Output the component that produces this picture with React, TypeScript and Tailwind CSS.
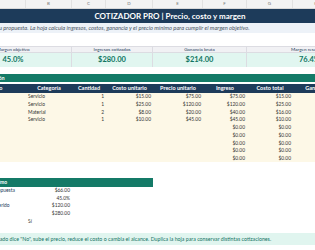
import React from "react";

const cols = "grid grid-cols-[71px_46px_34px_47px_50px_44px_46px_47px]";

const rows = [
  ["Diseño", "Servicio", "1", "$15.00", "$75.00", "$75.00", "$15.00", "$60.00"],
  ["Web", "Servicio", "1", "$25.00", "$120.00", "$120.00", "$25.00", "$95.00"],
  ["Folletos", "Material", "2", "$8.00", "$20.00", "$40.00", "$16.00", "$24.00"],
  ["Soporte", "Servicio", "1", "$10.00", "$45.00", "$45.00", "$10.00", "$35.00"],
  ["", "", "", "", "", "$0.00", "$0.00", "$0.00"],
  ["", "", "", "", "", "$0.00", "$0.00", "$0.00"],
  ["", "", "", "", "", "$0.00", "$0.00", "$0.00"],
  ["", "", "", "", "", "$0.00", "$0.00", "$0.00"],
  ["", "", "", "", "", "$0.00", "$0.00", "$0.00"],
];

const heads = ["Concepto", "Categoría", "Cantidad", "Costo unitario", "Precio unitario", "Ingreso", "Costo total", "Ganancia"];

const kpis = [
  { label: "Margen objetivo", value: "45.0%", w: "w-[117px]" },
  { label: "Ingresos cotizados", value: "$280.00", w: "w-[81px]" },
  { label: "Ganancia bruta", value: "$214.00", w: "w-[94px]" },
  { label: "Margen resultante", value: "76.4%", w: "w-[126px]" },
];

const minRows = [
  ["Costo total de la propuesta", "$66.00", "right"],
  ["Margen objetivo", "45.0%", "right"],
  ["Precio mínimo requerido", "$120.00", "right"],
  ["Precio cotizado", "$280.00", "right"],
  ["¿Cumple el margen?", "Sí", "left"],
];

export default function App() {
  return (
    <div className="w-[315px] h-[250px] overflow-hidden bg-white font-['Lato',sans-serif]">
      <div className="ml-[-45px] w-[430px]">
        {/* column letters */}
        <div className={`${cols} h-[9px] bg-[#f3f3f3] border-b border-[#d9d9d9]`}>
          {["A", "B", "C", "D", "E", "F", "G", "H"].map((l) => (
            <div key={l} className="flex items-center justify-center border-r border-[#e2e2e2] text-[4.5px] text-[#777] leading-none">
              {l}
            </div>
          ))}
        </div>
        {/* title */}
        <div className="h-[14px] bg-[#1d3b5a] flex items-center justify-center pl-[0px] pr-[45px] text-white font-bold text-[8px] leading-none whitespace-nowrap">
          <span className="ml-[45px]">COTIZADOR PRO | Precio, costo y margen</span>
        </div>
        {/* subtitle */}
        <div className="h-[10px] bg-[#edf2f8] flex items-center text-[5.75px] italic text-[#4b5563] leading-none whitespace-nowrap overflow-hidden">
          <span className="ml-[-23px]">
            Completa los conceptos de tu propuesta. La hoja calcula ingresos, costos, ganancia y el precio mínimo para cumplir el margen objetivo.
          </span>
        </div>
        <div className="h-[13px]" />
        {/* KPIs */}
        <div className="flex">
          {kpis.map((k) => (
            <div key={k.label} className={`${k.w} shrink-0 flex flex-col border-r border-[#dcdce2]`}>
              <div className="h-[7px] bg-[#f1f1f4] border-y border-[#dcdce2] flex items-center justify-center text-[4.6px] text-[#1d3b5a] leading-none whitespace-nowrap">
                {k.label}
              </div>
              <div className="h-[14px] bg-[#e1f6f0] flex items-center justify-center text-[7.5px] font-bold text-[#0f7562] leading-none whitespace-nowrap">
                {k.value}
              </div>
            </div>
          ))}
        </div>
        <div className="h-[7px]" />
        {/* section bar */}
        <div className="h-[8px] bg-[#147a67] flex items-center text-[5px] font-bold text-white leading-none whitespace-nowrap overflow-hidden">
          <span className="ml-[-2px]">Detalle de la cotización</span>
        </div>
        {/* table header */}
        <div className={`${cols} h-[9px] bg-[#1d3b5a] mt-[2px]`}>
          {heads.map((h) => (
            <div key={h} className="flex items-center justify-center text-[5.5px] font-bold text-white leading-none whitespace-nowrap overflow-hidden">
              {h}
            </div>
          ))}
        </div>
        {/* data rows */}
        <div className="bg-[#fdf8e7]">
          {rows.map((r, i) => (
            <div key={i} className={`${cols} h-[7.7px]`}>
              {r.map((c, j) => (
                <div
                  key={j}
                  className={`flex items-center px-[2px] text-[4.9px] text-[#333] leading-none whitespace-nowrap overflow-hidden ${
                    j <= 1 ? "justify-start" : "justify-end"
                  }`}
                >
                  {c}
                </div>
              ))}
            </div>
          ))}
        </div>
        <div className="h-[16px]" />
        {/* min price section */}
        <div className="w-[198px] h-[9px] bg-[#147a67] flex items-center text-[5px] font-bold text-white leading-none whitespace-nowrap overflow-hidden">
          <span className="ml-[-4px]">Cálculo de precio mínimo</span>
        </div>
        {minRows.map(([l, v, a], i) => (
          <div key={i} className={`${cols} ${i === 4 ? "h-[9px]" : "h-[7.5px]"}`}>
            <div className="flex items-center px-[2px] text-[4.9px] text-[#1d3b5a] leading-none whitespace-nowrap">{l}</div>
            <div className={`flex items-center px-[2px] text-[4.9px] text-[#333] leading-none whitespace-nowrap ${a === "right" ? "justify-end" : "justify-start"}`}>
              {v}
            </div>
          </div>
        ))}
        <div className="h-[7px]" />
        {/* note */}
        <div className="h-[12px] bg-[#e0f5ef] flex items-center pl-[21px] text-[5.25px] text-[#137263] leading-none whitespace-nowrap">
          Si el resultado dice "No", sube el precio, reduce el costo o cambia el alcance. Duplica la hoja para conservar distintas cotizaciones.
        </div>
      </div>
    </div>
  );
}
